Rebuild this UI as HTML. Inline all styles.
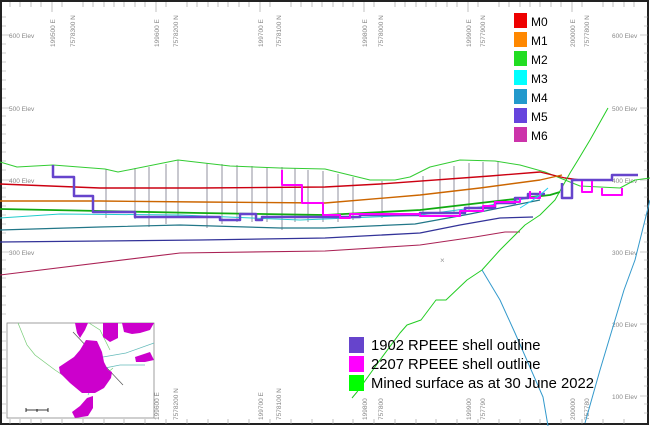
<!DOCTYPE html>
<html><head><meta charset="utf-8"><style>
html,body{margin:0;padding:0;background:#fff;}
svg{display:block;font-family:"Liberation Sans",sans-serif;}
</style></head><body>
<svg width="650" height="426" viewBox="0 0 650 426" xmlns="http://www.w3.org/2000/svg">
<rect x="0" y="0" width="650" height="426" fill="#fff"/>
<rect x="1" y="1" width="647" height="423" fill="none" stroke="#222" stroke-width="2"/>
<g stroke="#999" stroke-width="0.6">
<path d="M10 2v5M20 2v5M31 2v5M41 2v5M62 2v5M83 2v5M93 2v5M104 2v5M114 2v5M124 2v5M135 2v5M145 2v5M166 2v5M187 2v5M197 2v5M208 2v5M218 2v5M228 2v5M239 2v5M249 2v5M270 2v5M291 2v5M301 2v5M312 2v5M322 2v5M333 2v5M343 2v5M353 2v5M374 2v5M395 2v5M405 2v5M416 2v5M426 2v5M436 2v5M447 2v5M457 2v5M478 2v5M499 2v5M509 2v5M520 2v5M530 2v5M540 2v5M551 2v5M561 2v5M582 2v5M603 2v5M613 2v5M624 2v5M634 2v5"/>
<path d="M10 424v-5M20 424v-5M31 424v-5M41 424v-5M62 424v-5M83 424v-5M104 424v-5M124 424v-5M145 424v-5M166 424v-5M187 424v-5M208 424v-5M228 424v-5M249 424v-5M270 424v-5M291 424v-5M312 424v-5M333 424v-5M353 424v-5M374 424v-5M395 424v-5M416 424v-5M436 424v-5M457 424v-5M478 424v-5M499 424v-5M520 424v-5M540 424v-5M561 424v-5M582 424v-5M603 424v-5M624 424v-5"/>
<path d="M2 17h4M2 26h4M2 44h4M2 53h4M2 62h4M2 71h4M2 80h4M2 89h4M2 98h4M2 116h4M2 125h4M2 134h4M2 143h4M2 152h4M2 161h4M2 170h4M2 188h4M2 197h4M2 206h4M2 215h4M2 224h4M2 233h4M2 242h4M2 260h4M2 269h4M2 278h4M2 287h4M2 296h4M2 305h4M2 314h4M2 332h4M2 341h4M2 350h4M2 359h4M2 368h4M2 377h4M2 386h4M2 404h4M2 413h4"/>
<path d="M648 17h-4M648 26h-4M648 44h-4M648 53h-4M648 62h-4M648 71h-4M648 80h-4M648 89h-4M648 98h-4M648 116h-4M648 125h-4M648 134h-4M648 143h-4M648 152h-4M648 161h-4M648 170h-4M648 188h-4M648 197h-4M648 206h-4M648 215h-4M648 224h-4M648 233h-4M648 242h-4M648 260h-4M648 269h-4M648 278h-4M648 287h-4M648 296h-4M648 305h-4M648 314h-4M648 332h-4M648 341h-4M648 350h-4M648 359h-4M648 368h-4M648 377h-4M648 386h-4M648 404h-4M648 413h-4"/>
<path d="M2 35h8M2 108h8M2 180h8M2 252h8M640 35h8M640 108h8M640 180h8M640 252h8M640 324h8M640 396h8M52 2v10M156 2v10M260 2v10M364 2v10M468 2v10M572 2v10"/>
</g>
<g font-size="6.5" fill="#888">
<text x="9" y="38">600 Elev</text><text x="9" y="111">500 Elev</text><text x="9" y="183">400 Elev</text><text x="9" y="255">300 Elev</text>
<text x="612" y="38">600 Elev</text><text x="612" y="111">500 Elev</text><text x="612" y="183">400 Elev</text><text x="612" y="255">300 Elev</text><text x="612" y="327">200 Elev</text><text x="612" y="399">100 Elev</text>
<text transform="translate(55,47) rotate(-90)">199500 E</text><text transform="translate(75,47) rotate(-90)">7578300 N</text>
<text transform="translate(159,47) rotate(-90)">199600 E</text><text transform="translate(178,47) rotate(-90)">7578200 N</text>
<text transform="translate(263,47) rotate(-90)">199700 E</text><text transform="translate(281,47) rotate(-90)">7578100 N</text>
<text transform="translate(367,47) rotate(-90)">199800 E</text><text transform="translate(383,47) rotate(-90)">7578000 N</text>
<text transform="translate(471,47) rotate(-90)">199900 E</text><text transform="translate(485,47) rotate(-90)">7577900 N</text>
<text transform="translate(575,47) rotate(-90)">200000 E</text><text transform="translate(589,47) rotate(-90)">7577800 N</text>
<text transform="translate(159,420) rotate(-90)">199600 E</text><text transform="translate(178,420) rotate(-90)">7578200 N</text>
<text transform="translate(263,420) rotate(-90)">199700 E</text><text transform="translate(281,420) rotate(-90)">7578100 N</text>
<text transform="translate(367,420) rotate(-90)">199800</text><text transform="translate(383,420) rotate(-90)">757800</text>
<text transform="translate(471,420) rotate(-90)">199900</text><text transform="translate(485,420) rotate(-90)">757790</text>
<text transform="translate(575,420) rotate(-90)">200000</text><text transform="translate(589,420) rotate(-90)">757780</text>
</g>
<g stroke="#778" stroke-width="0.8">
<path d="M106 169V218M135 168V219M149 167V227M166 164V224M178 160V218M207 163V228M222 164V224M237 165V222M252 166V222M267 167V222M282 167V230M295 168V222M308 170V222M323 171V222M338 174V222M353 177V220M382 181V218M423 176V214M440 169V212M454 166V212M469 163V210M483 162V208M498 161V200"/>
</g>
<g fill="none" stroke-linejoin="round">
<path d="M0 162L17 167L53 165L105 169L118 172L178 160L230 166L280 168L325 169L370 180L395 180L410 177L430 167L460 160L495 161L520 165L545 172L560 178L580 186L620 188L635 180L650 178" stroke="#3c3" stroke-width="1"/>
<path d="M0 184L100 188L200 188L325 187L380 184L490 176L540 172L565 178L580 180" stroke="#c01" stroke-width="1.4"/>
<path d="M0 201L100 201L200 202L325 203L420 195L480 188L540 180L562 175" stroke="#c60" stroke-width="1.4"/>
<path d="M0 209L100 211L200 213L325 215L420 210L480 203L550 195L560 192" stroke="#1a1" stroke-width="1.8"/>
<path d="M0 218L60 214L180 215L300 220L420 215L480 207L540 196" stroke="#2cc" stroke-width="1"/>
<path d="M0 230L100 227L180 225L280 228L325 228L415 224L470 214L540 200" stroke="#278" stroke-width="1.2"/>
<path d="M0 242L200 240L325 238L420 233L460 225L500 218L533 217" stroke="#339" stroke-width="1.3"/>
<path d="M0 275L180 253L325 251L420 245L475 237L505 232L520 232" stroke="#a25" stroke-width="1.1"/>
<path d="M608 108L590 140L578 160L570 173L555 200L540 215L525 225L500 250L482 270L467 280L446 300L436 300L421 320L407 325L400 333L380 360L357 392L352 398" stroke="#2c2" stroke-width="1"/>
<path d="M482 270L500 300L515 333L543 397L548 426" stroke="#39c" stroke-width="1"/>
<path d="M650 200L635 260L624 290L600 370L585 423" stroke="#39c" stroke-width="1"/>
<path d="M53 165V177H74V196H93V212H135V217H220V220H240V214H256V220H262V217H360V215H420V213H465V208H495V203H515V198H528V194H545" stroke="#64c" stroke-width="2.5"/>
<path d="M562 183V198H572V180H612V175H638" stroke="#64c" stroke-width="2.5"/>
<path d="M282 170V185H302V203H323V215H340V218H350V214H420V216H460V211H483V206H495V202H520V198" stroke="#f0f" stroke-width="2"/>
<path d="M530 191V198H540V191" stroke="#f0f" stroke-width="2"/>
<path d="M582 181V192H592V181M602 188V195H622V188" stroke="#f0f" stroke-width="2"/>
<path d="M520 208L533 200L540 195L548 188" stroke="#2ce" stroke-width="1"/>
<text x="440" y="263" font-size="8" fill="#999">×</text>
</g>
<g font-size="12" fill="#000">
<rect x="514" y="13" width="13" height="15" fill="#e00"/><text x="531" y="26">M0</text>
<rect x="514" y="32" width="13" height="15" fill="#f80"/><text x="531" y="45">M1</text>
<rect x="514" y="51" width="13" height="15" fill="#2d2"/><text x="531" y="64">M2</text>
<rect x="514" y="70" width="13" height="15" fill="#0ff"/><text x="531" y="83">M3</text>
<rect x="514" y="89" width="13" height="15" fill="#29c"/><text x="531" y="102">M4</text>
<rect x="514" y="108" width="13" height="15" fill="#64d"/><text x="531" y="121">M5</text>
<rect x="514" y="127" width="13" height="15" fill="#c3a"/><text x="531" y="140">M6</text>
</g>
<g font-size="14.8" fill="#000">
<rect x="349" y="337" width="15" height="16" fill="#64c"/><text x="371" y="350">1902 RPEEE shell outline</text>
<rect x="349" y="356" width="15" height="16" fill="#f0f"/><text x="371" y="369">2207 RPEEE shell outline</text>
<rect x="349" y="375" width="15" height="16" fill="#0f0"/><text x="371" y="388">Mined surface as at 30 June 2022</text>
</g>
<rect x="7" y="323" width="147" height="95" fill="#fff" stroke="#888" stroke-width="0.8"/>
<g fill="none" stroke-width="0.7">
<path d="M18 323L27 345L35 355L55 370L70 380" stroke="#7c7"/>
<path d="M89 323L100 330L110 350" stroke="#7c7"/>
<path d="M103 357L126 353L154 343" stroke="#6bb"/>
<path d="M88 395L95 380L105 368L120 365L145 365" stroke="#6bb"/>
<path d="M95 390L105 375L113 368" stroke="#7c7"/>
<path d="M73 332L123 385" stroke="#555"/>
</g>
<g fill="#c0c">
<path d="M86 340L97 341L102 352L104 362L108 370L112 372L111 378L104 388L95 393L82 393L70 383L60 373L59 367L74 357L80 350Z"/>
<path d="M87 398L93 396L93 408L88 416L75 418L72 412L80 406Z"/>
<path d="M75 323L88 323L85 330L80 338L77 333Z"/>
<path d="M103 323L118 323L118 338L110 342L103 337Z"/>
<path d="M122 323L154 323L150 330L140 333L132 334L124 332Z"/>
<path d="M135 357L150 352L154 360L145 362L136 362Z"/>
</g>
<g stroke="#000" stroke-width="0.8" fill="none"><path d="M26 410H48M26 408V412M37 409V412M48 408V412"/></g>
</svg>
</body></html>
